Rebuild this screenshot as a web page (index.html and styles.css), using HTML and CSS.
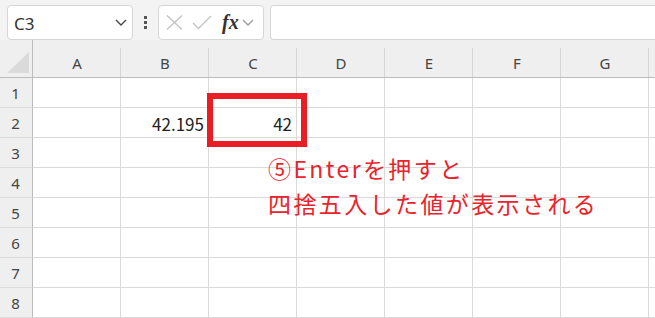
FILE: index.html
```html
<!DOCTYPE html>
<html lang="ja">
<head>
    <meta charset="UTF-8">
    <title>四捨五入</title>
    <link rel="stylesheet" href="styles.css">
</head>
<body>

    <!-- Formula bar -->
    <div class="toolbar">
        <div class="namebox">
            <span class="ref">C3</span>
            <svg class="chev" width="12" height="7" viewBox="0 0 12 7"><path d="M1 1 L6 6 L11 1" fill="none" stroke="#444" stroke-width="1.4"/></svg>
        </div>
        <div class="dots"><span></span><span></span><span></span></div>
        <div class="fxbox">
            <svg width="17" height="15" viewBox="0 0 17 15"><path d="M1 0.5 L16 14.5 M16 0.5 L1 14.5" stroke="#c4c4c4" stroke-width="1.4"/></svg>
            <svg width="20" height="15" viewBox="0 0 20 15"><path d="M1 8 L6.5 13.5 L19 1" fill="none" stroke="#c4c4c4" stroke-width="1.4"/></svg>
            <span class="fx">fx</span>
            <svg width="12" height="7" viewBox="0 0 12 7"><path d="M1 1 L6 6 L11 1" fill="none" stroke="#9a9a9a" stroke-width="1.3"/></svg>
        </div>
        <div class="formula"></div>
    </div>

    <!-- Sheet -->
    <div class="sheet">
        <div class="corner"><span class="tri"></span></div>
        <div class="colhead">A</div>
        <div class="colhead">B</div>
        <div class="colhead">C</div>
        <div class="colhead">D</div>
        <div class="colhead">E</div>
        <div class="colhead">F</div>
        <div class="colhead">G</div>
        <div class="colhead"></div>

        <div class="rowhead">1</div>
        <div class="cell"></div><div class="cell"></div><div class="cell"></div><div class="cell"></div><div class="cell"></div><div class="cell"></div><div class="cell"></div><div class="cell"></div>

        <div class="rowhead">2</div>
        <div class="cell"></div><div class="cell num">42.195</div><div class="cell num">42</div><div class="cell"></div><div class="cell"></div><div class="cell"></div><div class="cell"></div><div class="cell"></div>

        <div class="rowhead">3</div>
        <div class="cell"></div><div class="cell"></div><div class="cell"></div><div class="cell"></div><div class="cell"></div><div class="cell"></div><div class="cell"></div><div class="cell"></div>

        <div class="rowhead">4</div>
        <div class="cell"></div><div class="cell"></div><div class="cell"></div><div class="cell"></div><div class="cell"></div><div class="cell"></div><div class="cell"></div><div class="cell"></div>

        <div class="rowhead">5</div>
        <div class="cell"></div><div class="cell"></div><div class="cell"></div><div class="cell"></div><div class="cell"></div><div class="cell"></div><div class="cell"></div><div class="cell"></div>

        <div class="rowhead">6</div>
        <div class="cell"></div><div class="cell"></div><div class="cell"></div><div class="cell"></div><div class="cell"></div><div class="cell"></div><div class="cell"></div><div class="cell"></div>

        <div class="rowhead">7</div>
        <div class="cell"></div><div class="cell"></div><div class="cell"></div><div class="cell"></div><div class="cell"></div><div class="cell"></div><div class="cell"></div><div class="cell"></div>

        <div class="rowhead">8</div>
        <div class="cell"></div><div class="cell"></div><div class="cell"></div><div class="cell"></div><div class="cell"></div><div class="cell"></div><div class="cell"></div><div class="cell"></div>

        <!-- annotation -->
        <div class="highlight"></div>
        <div class="note">⑤Enterを押すと<br>四捨五入した値が表示される</div>
    </div>

</body>
</html>
```

FILE: styles.css
```css
/* Basic Styles */
body {
    margin: 0;
    width: 655px;
    height: 318px;
    overflow: hidden;
    background-color: #fff;
    font-family: 'Noto Sans', 'Noto Sans CJK JP', sans-serif;
}

/* Formula bar */
.toolbar {
    display: flex;
    align-items: flex-start;
    height: 40px;
    padding: 5px 0 0 7px;
    box-sizing: border-box;
    background-color: #f3f3f3;
}
.namebox {
    display: flex;
    align-items: center;
    justify-content: space-between;
    width: 126px;
    height: 35px;
    box-sizing: border-box;
    padding: 0 5px 0 6px;
    background-color: #fff;
    border: 1px solid #d6d6d6;
    border-radius: 4px;
}
.ref {
    font-size: 17px;
    color: #333;
    padding-top: 1px;
}
.dots {
    display: flex;
    flex-direction: column;
    gap: 2px;
    width: 25px;
    align-items: center;
    padding-top: 11px;
}
.dots span {
    width: 3px;
    height: 3px;
    background-color: #555;
}
.fxbox {
    display: flex;
    align-items: center;
    gap: 9px;
    width: 106px;
    height: 35px;
    box-sizing: border-box;
    padding: 0 0 0 7px;
    background-color: #fff;
    border: 1px solid #d6d6d6;
    border-radius: 4px;
}
.fx {
    font-family: 'Liberation Serif', serif;
    font-style: italic;
    font-weight: bold;
    font-size: 20px;
    color: #333;
    margin-left: 1px;
    margin-right: -6px;
}
.formula {
    flex: 1;
    height: 35px;
    margin-left: 6px;
    box-sizing: border-box;
    background-color: #fff;
    border: 1px solid #d6d6d6;
    border-right: none;
    border-radius: 4px 0 0 4px;
}

/* Sheet grid */
.sheet {
    position: relative;
    display: grid;
    grid-template-columns: 33px repeat(8, 88px);
    grid-template-rows: 38px repeat(8, 30px);
    overflow: hidden;
}
.corner {
    background-color: #efefef;
    border-right: 1px solid #bcbcbc;
    border-bottom: 1px solid #bcbcbc;
    box-sizing: border-box;
    position: relative;
}
.tri {
    position: absolute;
    left: 7px;
    bottom: 4px;
    width: 0;
    height: 0;
    border-left: 22px solid transparent;
    border-bottom: 21px solid #dadada;
}
.colhead {
    display: flex;
    align-items: center;
    justify-content: center;
    padding-top: 8px;
    box-sizing: border-box;
    background-color: #efefef;
    border-bottom: 1px solid #bcbcbc;
    font-size: 15px;
    color: #444;
    background-image: linear-gradient(#d4d4d4, #d4d4d4);
    background-size: 1px 29px;
    background-position: right bottom;
    background-repeat: no-repeat;
}
.rowhead {
    display: flex;
    align-items: center;
    justify-content: center;
    box-sizing: border-box;
    background-color: #efefef;
    border-right: 1px solid #bcbcbc;
    border-bottom: 1px solid #dcdcdc;
    font-size: 15px;
    color: #444;
    padding-right: 1px;
}
.cell {
    box-sizing: border-box;
    border-right: 1px solid #dadada;
    border-bottom: 1px solid #dadada;
}
.num {
    display: flex;
    align-items: center;
    justify-content: flex-end;
    padding: 1px 4px 0 0;
    font-family: 'Noto Sans CJK JP', sans-serif;
    font-size: 17px;
    color: #222;
}

/* Annotation */
.highlight {
    position: absolute;
    left: 207px;
    top: 53px;
    width: 100px;
    height: 54px;
    box-sizing: border-box;
    border: 6px solid #ea1d25;
}
.note {
    position: absolute;
    left: 268px;
    top: 111px;
    font-family: 'Noto Sans CJK JP', sans-serif;
    font-size: 23px;
    line-height: 35px;
    letter-spacing: 2.4px;
    color: #e8242b;
    white-space: nowrap;
}
```
